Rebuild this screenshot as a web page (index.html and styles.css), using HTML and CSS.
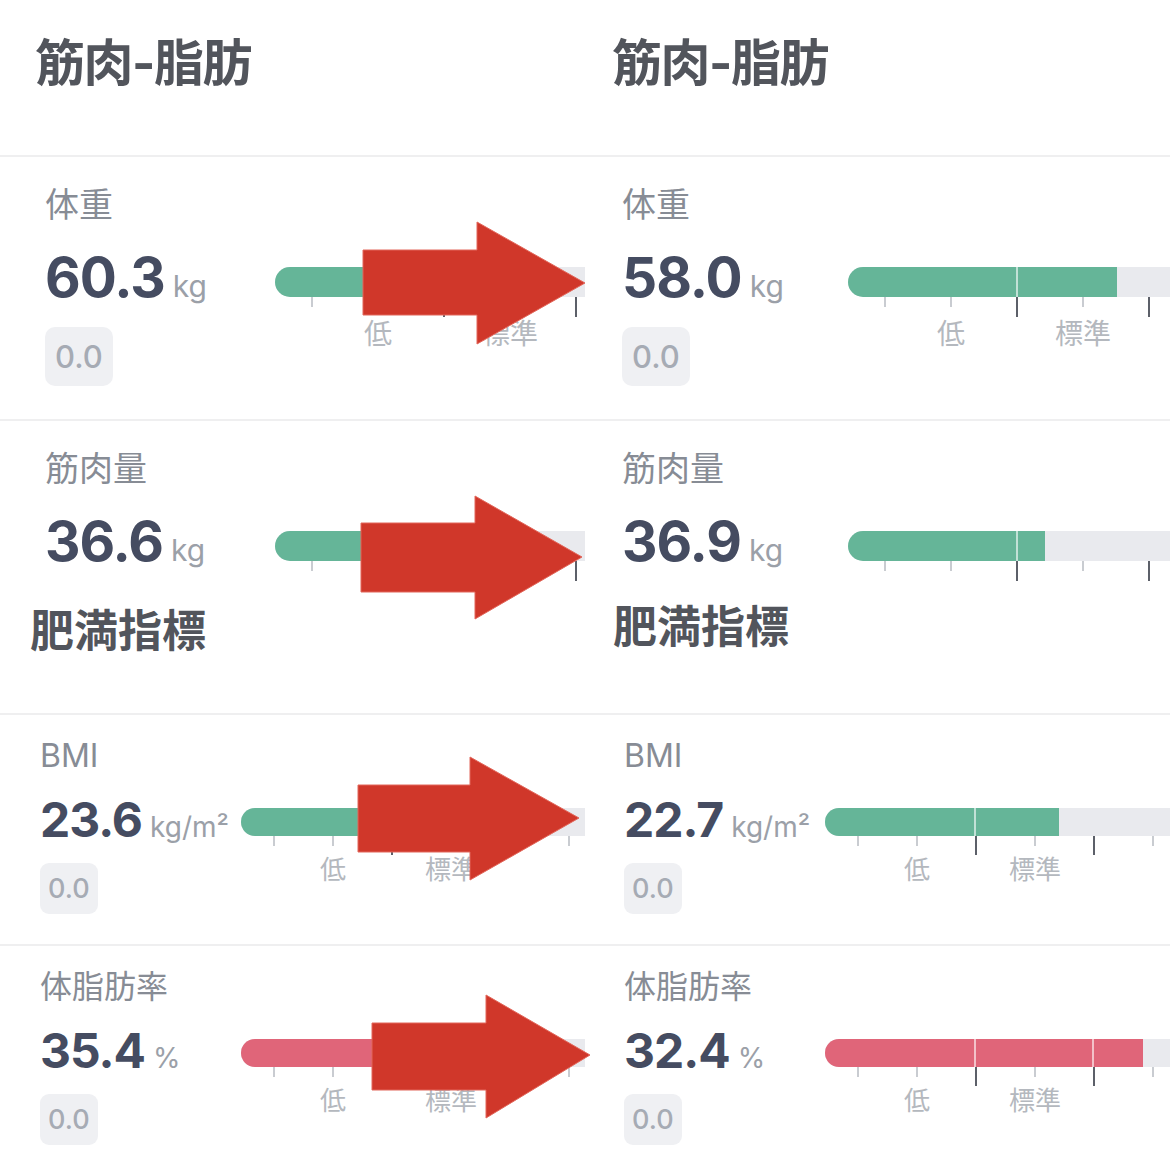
FILE: index.html
```html
<!DOCTYPE html>
<html lang="ja">
<head>
    <meta charset="UTF-8">
    <meta name="viewport" content="width=device-width, initial-scale=1.0">
    <title>筋肉-脂肪 ビフォー・アフター</title>
    <link rel="stylesheet" href="styles.css">
</head>
<body>
    <div class="collage">
        <!-- before -->
        <section class="shot shot-before">
            <div class="part part-top">
                <div class="heading"><h2>筋肉-脂肪</h2></div>
                <div class="card">
                    <div class="label">体重</div>
                    <div class="card-body">
                        <div class="reading">
                            <div class="value"><b>60.3</b><span class="unit">kg</span></div>
                            <div class="badge">0.0</div>
                        </div>
                        <div class="gauge">
                            <div class="track green"><div class="fill"><i style="width:168px"></i><i style="width:90px"></i></div></div>
                            <div class="ticks"><i></i><i></i><i class="major"></i><i></i><i class="major"></i><i></i></div>
                            <div class="scale"><span>低</span><span>標準</span></div>
                        </div>
                    </div>
                </div>
                <div class="card card-cut">
                    <div class="label">筋肉量</div>
                    <div class="card-body">
                        <div class="reading">
                            <div class="value"><b>36.6</b><span class="unit">kg</span></div>
                        </div>
                        <div class="gauge">
                            <div class="track green"><div class="fill"><i style="width:168px"></i><i style="width:20px"></i></div></div>
                            <div class="ticks"><i></i><i></i><i class="major"></i><i></i><i class="major"></i><i></i></div>
                        </div>
                    </div>
                </div>
            </div>
            <div class="part part-bottom">
                <div class="heading"><h2>肥満指標</h2></div>
                <div class="card">
                    <div class="label">BMI</div>
                    <div class="card-body">
                        <div class="reading">
                            <div class="value"><b>23.6</b><span class="unit">kg/m²</span></div>
                            <div class="badge">0.0</div>
                        </div>
                        <div class="gauge">
                            <div class="track green"><div class="fill"><i style="width:149px"></i><i style="width:118px"></i><i style="width:20px"></i></div></div>
                            <div class="ticks"><i></i><i></i><i class="major"></i><i></i><i class="major"></i><i></i></div>
                            <div class="scale"><span>低</span><span>標準</span></div>
                        </div>
                    </div>
                </div>
                <div class="card">
                    <div class="label">体脂肪率</div>
                    <div class="card-body">
                        <div class="reading">
                            <div class="value"><b>35.4</b><span class="unit">%</span></div>
                            <div class="badge">0.0</div>
                        </div>
                        <div class="gauge">
                            <div class="track pink"><div class="fill"><i style="width:149px"></i><i style="width:118px"></i><i style="width:20px"></i></div></div>
                            <div class="ticks"><i></i><i></i><i class="major"></i><i></i><i class="major"></i><i></i></div>
                            <div class="scale"><span>低</span><span>標準</span></div>
                        </div>
                    </div>
                </div>
            </div>
        </section>

        <!-- after -->
        <section class="shot shot-after">
            <div class="part part-top">
                <div class="heading"><h2>筋肉-脂肪</h2></div>
                <div class="card">
                    <div class="label">体重</div>
                    <div class="card-body">
                        <div class="reading">
                            <div class="value"><b>58.0</b><span class="unit">kg</span></div>
                            <div class="badge">0.0</div>
                        </div>
                        <div class="gauge">
                            <div class="track green"><div class="fill"><i style="width:168px"></i><i style="width:101px"></i></div></div>
                            <div class="ticks"><i></i><i></i><i class="major"></i><i></i><i class="major"></i><i></i></div>
                            <div class="scale"><span>低</span><span>標準</span></div>
                        </div>
                    </div>
                </div>
                <div class="card card-cut">
                    <div class="label">筋肉量</div>
                    <div class="card-body">
                        <div class="reading">
                            <div class="value"><b>36.9</b><span class="unit">kg</span></div>
                        </div>
                        <div class="gauge">
                            <div class="track green"><div class="fill"><i style="width:168px"></i><i style="width:29px"></i></div></div>
                            <div class="ticks"><i></i><i></i><i class="major"></i><i></i><i class="major"></i><i></i></div>
                        </div>
                    </div>
                </div>
            </div>
            <div class="part part-bottom">
                <div class="heading"><h2>肥満指標</h2></div>
                <div class="card">
                    <div class="label">BMI</div>
                    <div class="card-body">
                        <div class="reading">
                            <div class="value"><b>22.7</b><span class="unit">kg/m²</span></div>
                            <div class="badge">0.0</div>
                        </div>
                        <div class="gauge">
                            <div class="track green"><div class="fill"><i style="width:149px"></i><i style="width:85px"></i></div></div>
                            <div class="ticks"><i></i><i></i><i class="major"></i><i></i><i class="major"></i><i></i></div>
                            <div class="scale"><span>低</span><span>標準</span></div>
                        </div>
                    </div>
                </div>
                <div class="card">
                    <div class="label">体脂肪率</div>
                    <div class="card-body">
                        <div class="reading">
                            <div class="value"><b>32.4</b><span class="unit">%</span></div>
                            <div class="badge">0.0</div>
                        </div>
                        <div class="gauge">
                            <div class="track pink"><div class="fill"><i style="width:149px"></i><i style="width:118px"></i><i style="width:51px"></i></div></div>
                            <div class="ticks"><i></i><i></i><i class="major"></i><i></i><i class="major"></i><i></i></div>
                            <div class="scale"><span>低</span><span>標準</span></div>
                        </div>
                    </div>
                </div>
            </div>
        </section>

        <!-- red arrows drawn over the before/after pair -->
        <svg class="arrows" width="1170" height="1170" viewBox="0 0 1170 1170">
            <polygon points="363,250 477,250 477,222 585,283 477,344 477,315 363,315"/>
            <polygon points="361,523 475,523 475,496 582,557 475,619 475,592 361,592"/>
            <polygon points="358,785 470,785 470,757 579,818 470,880 470,852 358,852"/>
            <polygon points="372,1023 486,1023 486,995 590,1055 486,1118 486,1090 372,1090"/>
        </svg>
    </div>
</body>
</html>
```

FILE: styles.css
```css
body {
    margin: 0;
    padding: 0;
    background: #fff;
    font-family: Inter, "Noto Sans CJK JP", sans-serif;
    line-height: 1;
}

.collage {
    position: relative;
    display: flex;
    width: 1170px;
    height: 1170px;
    overflow: hidden;
}

.shot {
    width: 585px;
    flex: none;
    overflow: hidden;
    background: #fff;
}

/* headings */
.heading h2 {
    margin: 0;
    color: #52555c;
    font-weight: 700;
    white-space: nowrap;
}

.part-top .heading {
    height: 155px;
    box-sizing: border-box;
    padding-top: 38px;
}

.part-top .heading h2 {
    font-size: 50px;
    line-height: 50px;
    letter-spacing: -1.5px;
}

.part-bottom .heading {
    height: 123px;
    box-sizing: border-box;
    padding-top: 15px;
}

.part-bottom .heading h2 {
    font-size: 44px;
    line-height: 44px;
}

.shot-before .part-top .heading { padding-left: 35px; }
.shot-after .part-top .heading { padding-left: 27px; }
.shot-before .part-bottom .heading { padding-left: 30px; padding-top: 19px; }
.shot-after .part-bottom .heading { padding-left: 28px; }

/* cards */
.card {
    box-sizing: border-box;
    border-top: 2px solid #efeff0;
    overflow: hidden;
}

.part-top .card {
    height: 264px;
    padding-top: 31px;
}

.part-top .card-cut {
    height: 171px;
}

.part-bottom .card {
    height: 231px;
    padding-top: 25px;
}

.part-bottom .card:last-child {
    height: 226px;
}

.shot-before .part-top .card { padding-left: 45px; }
.shot-after .part-top .card { padding-left: 37px; }
.shot-before .part-bottom .card { padding-left: 40px; }
.shot-after .part-bottom .card { padding-left: 39px; }

.label {
    color: #878c95;
    white-space: nowrap;
}

.part-top .label {
    font-size: 34px;
    line-height: 34px;
}

.part-bottom .label {
    font-size: 32px;
    line-height: 32px;
}

.card-body {
    display: flex;
    align-items: flex-start;
}

.part-top .card-body { margin-top: 28px; }
.part-bottom .card-body { margin-top: 24px; }

.reading {
    flex: none;
}

.shot-before .part-top .reading { width: 230px; }
.shot-after .part-top .reading { width: 226px; }
.part-bottom .reading { width: 201px; }

.value {
    white-space: nowrap;
}

.value b {
    color: #454c61;
    font-weight: 700;
    letter-spacing: -1px;
}

.unit {
    margin-left: 8px;
    color: #9ba0a8;
    font-weight: 400;
}

.part-top .value {
    font-size: 55px;
    line-height: 55px;
}

.part-top .unit { font-size: 30px; }

.part-bottom .value {
    font-size: 48px;
    line-height: 48px;
}

.part-bottom .unit { font-size: 28px; }

.badge {
    display: inline-block;
    background: #eff0f3;
    color: #a6abb4;
    font-weight: 500;
}

.part-top .badge {
    margin-top: 13px;
    height: 59px;
    padding: 0 10px;
    border-radius: 10px;
    font-size: 31px;
    line-height: 59px;
}

.part-bottom .badge {
    margin-top: 12px;
    height: 51px;
    padding: 0 8px;
    border-radius: 9px;
    font-size: 27px;
    line-height: 51px;
}

/* gauge */
.gauge {
    flex: 1;
    min-width: 0;
}

.track {
    width: 420px;
    background: #e9eaee;
    border-radius: 15px 0 0 15px;
}

.fill {
    display: flex;
    height: 100%;
}

.fill i {
    display: block;
    height: 100%;
    box-sizing: border-box;
}

.fill i + i {
    border-left: 2px solid rgba(255, 255, 255, 0.6);
}

.green .fill i { background: #65b598; }
.pink .fill i { background: #e06579; }

.fill i:first-child { border-radius: 15px 0 0 15px; }

.part-top .gauge { margin-top: 17px; }
.part-top .track { height: 30px; }

.part-bottom .gauge { margin-top: 12px; }
.part-bottom .track { height: 28px; }

.ticks {
    display: flex;
    align-items: flex-start;
}

.ticks i {
    display: block;
    width: 2px;
    background: #c9ccd1;
    flex: none;
}

.ticks i.major {
    background: #5c6069;
}

.part-top .ticks { padding-left: 36px; gap: 64px; }
.part-top .ticks i { height: 10px; }
.part-top .ticks i.major { height: 20px; }

.part-bottom .ticks { padding-left: 32px; gap: 57px; }
.part-bottom .ticks i { height: 10px; }
.part-bottom .ticks i.major { height: 19px; }

.scale {
    display: flex;
    color: #b4b8be;
    white-space: nowrap;
}

.scale span {
    flex: none;
    text-align: center;
}

.part-top .scale {
    margin-top: 3px;
    padding-left: 37px;
    font-size: 28px;
    line-height: 28px;
}

.part-top .scale span { width: 132px; }

.part-bottom .scale {
    margin-top: 2px;
    padding-left: 33px;
    font-size: 26px;
    line-height: 26px;
}

.part-bottom .scale span { width: 118px; }

/* overlay */
.arrows {
    position: absolute;
    left: 0;
    top: 0;
    pointer-events: none;
}

.arrows polygon {
    fill: #d0372a;
    stroke: #e2675b;
    stroke-width: 1;
}
```
